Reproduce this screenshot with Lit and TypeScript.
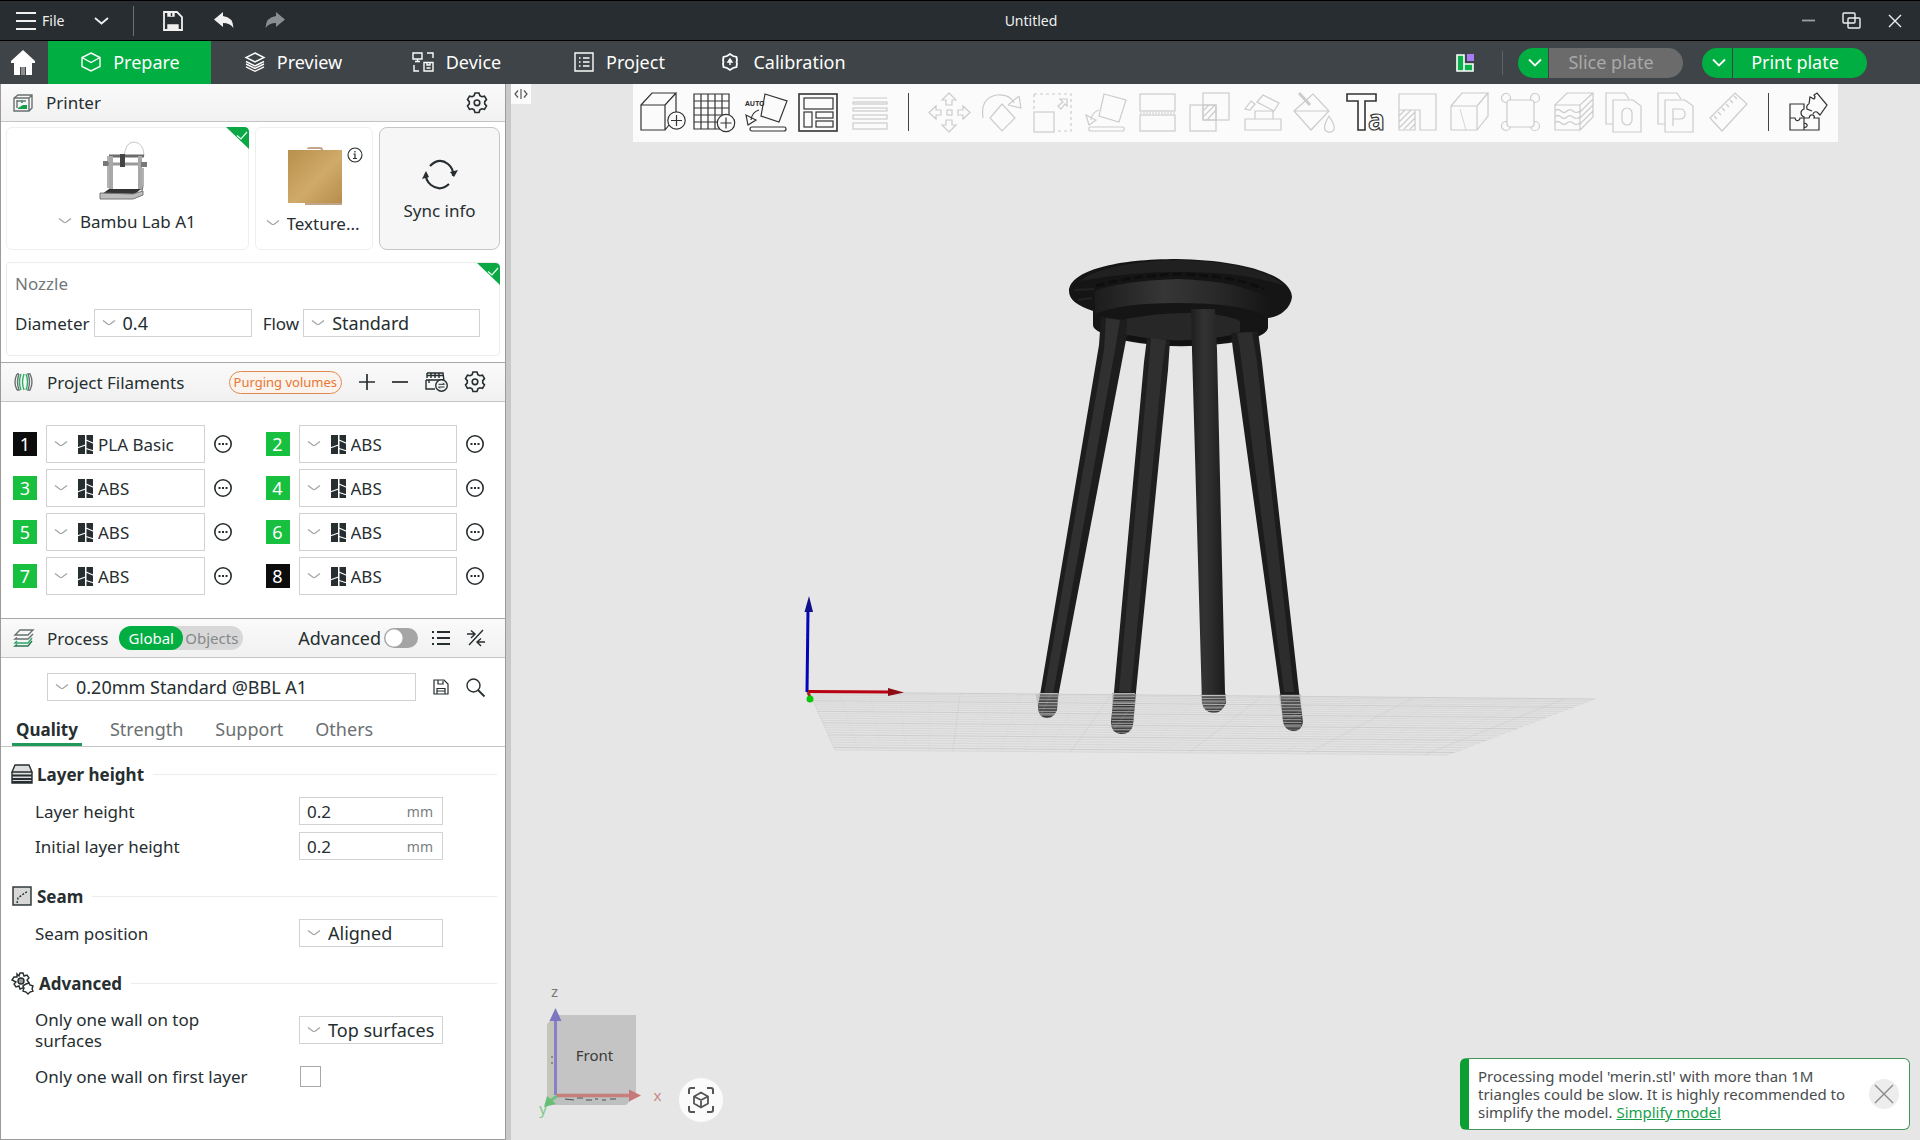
import { LitElement, html, svg, css, nothing } from "lit";
import type { TemplateResult } from "lit";
import { customElement, state } from "lit/decorators.js";
import { classMap } from "lit/directives/class-map.js";

type Shape = ReturnType<typeof svg>;

const icon = (w: number, h: number, body: Shape, cls = "") =>
  html`<svg class="ic ${cls}" width=${w} height=${h} viewBox="0 0 ${w} ${h}" aria-hidden="true">${body}</svg>`;

const chevron = () => icon(14, 8, svg`<path d="M1 1.500 6 5.300Q7 6 8 5.300L13 1.500"/>`, "chev");

const gearPath =
  "M8 1h4l.9 2.6 1.9 1.1 2.7-.6 2 3.5-1.8 2v2.3l1.8 2-2 3.5-2.7-.6-1.900 1.100L12 20.500H8l-.9-2.600-1.900-1.100-2.700.6-2-3.500 1.800-2V9.600l-1.800-2 2-3.500 2.700.6 1.900-1.100z";
const gear = () => icon(20, 22, svg`<path d=${gearPath}/><circle cx="10" cy="10.800" r="2.800"/>`, "gear");

const corner = () =>
  html`<span class="corner">${icon(23, 22, svg`<path d="M0 0H18Q23 0 23 5V22Z" fill="#0aa845" stroke="none"/><path d="M11 8.500 15 12 21 5" stroke="#eafff0" stroke-width="1.200"/>`)}</span>`;

const brand = () =>
  icon(15, 19, svg`<path d="M0 0H7V19H0ZM8.500 0H15V19H8.500Z" fill="#262e30" stroke="none"/><path d="M-1 13 7.500 10M8 5 16 8.500M8 13.500 16 16" stroke="#fff" stroke-width="1.200"/>`);

const navIcons: Record<string, TemplateResult> = {
  Prepare: icon(20, 20, svg`<path d="M10 1 19 5.500V14.500L10 19 1 14.500V5.500ZM1 5.500 10 10.500 19 5.500"/>`),
  Preview: icon(20, 20, svg`<path d="M10 1 19 5.500 10 10 1 5.500ZM1 9.500 10 14 19 9.500M1 12 10 16.500 19 12M1 14.800 10 19.300 19 14.800"/>`),
  Device: icon(22, 20, svg`<path d="M1 1H10V7H1ZM5.500 7V9.500M3 9.500H8M15 1H21V6M2 13V19H7M12 10.500H21V19H12ZM15 10.500V13H18V10.500M14.500 16H18.500"/>`),
  Project: icon(20, 20, svg`<path d="M1 1H19V19H1ZM5 6H6.500M9 6H15.500M5 10H6.500M9 10H15.500M5 14H6.500M9 14H15.500"/>`),
  Calibration: icon(22, 18, svg`<path d="M8 3 11 1 14 3 17.500 4 18 7.500 17.500 9 18 10.500 17.500 14 14 15 11 17 8 15 4.500 14 4 10.500 4.500 9 4 7.500 4.500 4Z" stroke-width="1.800"/><path d="M11 12V8M9 9 11 6 13 9Z" fill="#fff"/>`),
};

interface Tool { name: string; on?: boolean; art: Shape }
const tools: (Tool | null)[] = [
  { name: "Add", on: true, art: svg`<path d="M0 13H24V38H0ZM0 13 11 1H35L24 13M35 1V21M24 38 28 33"/><circle cx="35.500" cy="28.500" r="8.700" fill="#fbfbfb"/><path d="M30 28.500H41M35.500 23V34"/>` },
  { name: "Add plate", on: true, art: svg`<path d="M1 2H36V37H1ZM8 2V37M15 2V37M22 2V37M29 2V37M1 9H36M1 16H36M1 23H36M1 30H36"/><circle cx="33" cy="31" r="8.700" fill="#fbfbfb"/><path d="M27.500 31H38.500M33 25.500V36.500"/>` },
  { name: "Auto orient", on: true, art: svg`<text x="0" y="14" font-size="7" font-weight="700" stroke="none" fill="#333">AUTO</text><path d="M20 2 42 9 34 30 16 24Z"/><path d="M14 18Q7 20 6 28M1 23 3 33 11 28Z"/><rect x="5" y="35" width="36" height="4" rx="2"/>` },
  { name: "Arrange", on: true, art: svg`<rect x="2" y="2" width="38" height="37" stroke-width="1.600"/><rect x="7" y="6" width="29" height="11"/><rect x="7" y="20" width="8" height="15"/><rect x="19" y="20" width="17" height="6"/><rect x="19" y="29" width="17" height="6"/>` },
  { name: "Variable layer height", art: svg`<path d="M4 6H38"/><rect x="4" y="10" width="34" height="2"/><rect x="4" y="16" width="34" height="3"/><rect x="4" y="23" width="34" height="4"/><rect x="4" y="31" width="34" height="6"/>` },
  null,
  { name: "Move", art: svg`<path d="M20 1 27 8H23V13H17V8H13ZM20 40 27 33H23V28H17V33H13ZM0 20.500 7 14V18H12V23H7V27ZM41 20.500 34 14V18H29V23H34V27Z"/><rect x="18" y="18" width="5" height="5"/>` },
  { name: "Rotate", art: svg`<path d="M2 26Q-1 6 16 3 29 2 33 11M27 13 40 16 38 4M27 13 38 4M21 12 34 26 21 39 9 26Z"/>` },
  { name: "Scale", art: svg`<rect x="1" y="20" width="20" height="20"/><path d="M1 2H38V39H21M1 2V20" stroke-dasharray="3 3"/><path d="M25 14 30 10 27 7H34V14L32 12 28 17Z"/>` },
  { name: "Lay on face", art: svg`<path d="M19 2 41 8 34 30 14 24ZM14 18Q7 20 6 28M1 23 4 33 11 28Z"/><rect x="4" y="35" width="35" height="4" rx="1"/>` },
  { name: "Cut", art: svg`<rect x="3" y="2" width="35" height="17"/><rect x="3" y="23" width="35" height="16"/><path d="M3 21H38" stroke-dasharray="2 1"/>` },
  { name: "Mesh boolean", art: svg`<rect x="1" y="13" width="26" height="26"/><rect x="14" y="1" width="26" height="27"/><path d="M14 13H27V28H14ZM15 18 20 13M15 24 26 13M18 28 27 18"/>` },
  { name: "Support painting", art: svg`<path d="M4 27H40V38H4ZM14 27V19H32V27M16 10 22 3 38 11 33 19ZM4 17 10 9 14 12 9 18Z"/>` },
  { name: "Color painting", art: svg`<path d="M1 19 20 2 36 19 18 38ZM1 19H36"/><path d="M6 1 17 13" stroke-width="3"/><path d="M36 24Q44 36 40 39 36 42 32 38 30 34 36 24Z" fill="#fbfbfb"/>` },
  { name: "Text shape", on: true, art: svg`<path d="M2 2H31V9H20V38H13V9H2Z" stroke-width="1.600"/><text x="23" y="38" font-size="28" fill="#fbfbfb" stroke="#333" stroke-width="1.200" font-weight="700">a</text>` },
  { name: "Part painting", art: svg`<path d="M2 2H39V38H23V18H2ZM2 18V38H18V18M2 24 8 18M2 30 14 18M2 36 18 20M7 37 18 26M13 37 18 32"/>` },
  { name: "Seam painting", art: svg`<path d="M2 14H28V38H2ZM2 14 13 1H39L28 14M39 1V24L28 38"/><path d="M11 17 17 38" stroke-width=".8"/>` },
  { name: "Assembly frame", art: svg`<circle cx="5" cy="6" r="4.500"/><circle cx="34" cy="6" r="4.500"/><circle cx="5" cy="34" r="4.500"/><circle cx="34" cy="34" r="4.500"/><rect x="6" y="8" width="27" height="27" rx="3" fill="#fbfbfb"/>` },
  { name: "Fuzzy skin", art: svg`<path d="M2 13 14 1H40L27 13ZM40 1V25L27 38V13M27 20 40 7M27 26 40 13M27 32 40 19M2 13V38H27M2 19Q5 16 8 19T14 19 20 19 27 19M2 25Q5 22 8 25T14 25 20 25 27 25M2 31Q5 28 8 31T14 31 20 31 27 31"/>` },
  { name: "Outline view", art: svg`<path d="M8 32H1V1H20L24 7"/><path d="M8 8H28L36 14V40H8Z"/><rect x="17" y="16" width="10" height="17" rx="5"/>` },
  { name: "Part view", art: svg`<path d="M8 32H1V1H20L24 7"/><path d="M8 8H28L36 14V40H8Z"/><path d="M16 34V17H23Q28 17 28 22 28 27 23 27H16"/>` },
  { name: "Measure", art: svg`<path d="M1 26 26 1 38 12 13 39ZM5 24 8 27M9 20 12 23M13 16 16 19M17 12 20 15M21 8 24 11M25 4 28 7"/>` },
  null,
  { name: "Assembly view", on: true, art: svg`<path d="M1 12H15V17Q12 18 12 21T15 25V38H1ZM1 26H6Q7 30 10 28 11 27 11 26H15M15 26H20Q21 22 24 23 26 24 25 26H30V38H1M15 26V31Q19 32 18 34 17 36 15 35M20 12 21 5 25 7Q27 5 25 3L28 1 38 13 31 23 28 20Q25 19 24 22M20 12Q17 13 18 17L23 19"/>` },
];

const sectionIcons: Record<string, TemplateResult> = {
  "Layer height": icon(22, 20, svg`<path d="M4 1H18L21 8H1ZM1 8V19H21V8" fill="#ddd"/><path d="M1 11.500H21M1 15H21M1 18H21" stroke-width="2"/>`),
  Seam: icon(22, 20, svg`<rect x="2" y="1" width="18" height="18" fill="#d8d8d8"/><path d="M6 17 7 12 11 9 17 5" stroke-dasharray="2 1.500"/>`),
  Advanced: icon(24, 22, svg`<path d="M6 2 8 4 9 1H12L13 4 16 3 18 6 16 8 18 11 16 13 13 13 12 16 9 17 8 14 5 15 3 12 5 10 1 8 3 5 6 5Z"/><circle cx="10" cy="9" r="3" fill="#999"/><path d="M15 12 18 11 19 13 22 14 21 17 22 19 19 20 17 22 15 20 12 19 13 16 12 14Z" fill="#fff"/>`),
};

const shared = css`
  :host { --ink: #262e30; --line: #d2d2d2; --green: #00ae42; font-family: "Noto Sans", "Liberation Sans", sans-serif; color: var(--ink); box-sizing: border-box; }
  *, *::before, *::after { box-sizing: border-box; }
  button, input, select { font: inherit; color: inherit; margin: 0; }
  button { display: flex; align-items: center; justify-content: center; padding: 0; border: 0; background: none; }
  .ic { display: block; flex: none; overflow: visible; fill: none; stroke: currentColor; stroke-width: 1.4; }
  .chev { color: #a2a6a8; stroke-width: 1.3; }
`;

@customElement("title-bar")
export class TitleBar extends LitElement {
  static styles = [shared, css`
    :host { display: flex; align-items: center; height: 41px; padding: 0 18px 0 16px; border-top: 1px solid #000; border-bottom: 1px solid #000; background: #272d30; color: #f0f0f0; font-size: 14px; }
    .group { flex: 1 1 0; display: flex; align-items: center; }
    .file { gap: 6px; }
    .drop { margin-left: 30px; }
    .sep { width: 1px; height: 30px; margin: 0 29px 0 24px; background: #6b7073; }
    .tools { display: flex; gap: 31px; }
    .right { justify-content: flex-end; gap: 26px; }
    .title { margin: 0 0 0 144px; font-size: 14px; font-weight: 400; }
    .dim { color: #8a8e90; }
  `];
  render() {
    return html`
      <div class="group">
        <button class="file">${icon(20, 18, svg`<path d="M0 1H20M0 9H20M0 17H20" stroke-width="1.800"/>`)}File</button>
        <button class="drop" aria-label="File menu">${icon(15, 8, svg`<path d="M1 1 7.500 6.500 14 1" stroke-width="1.800"/>`)}</button>
        <span class="sep"></span>
        <span class="tools">
          <button aria-label="Save">${icon(20, 20, svg`<path d="M1 1H14L19 6V19H1Z" stroke-width="1.800"/><path d="M5 2H11V5H5ZM5 14H15V18H5Z" fill="#f0f0f0"/><path d="M8.500 2V5" stroke="#272d30"/>`)}</button>
          <button aria-label="Undo">${icon(20, 18, svg`<path d="M0 7.500 9 0V4Q19 5 19.500 16 16 11 9 11V15Z" fill="#f0f0f0" stroke="none"/>`)}</button>
          <button class="dim" aria-label="Redo">${icon(20, 18, svg`<path d="M20 7.500 11 0V4Q1 5 .5 16 4 11 11 11V15Z" fill="#8a8e90" stroke="none"/>`)}</button>
        </span>
      </div>
      <h1 class="title">Untitled</h1>
      <div class="group right">
        <button aria-label="Minimize">${icon(14, 18, svg`<path d="M0 8.500H13" stroke="#9da0a2" stroke-width="1.800"/>`)}</button>
        <button aria-label="Restore">${icon(20, 18, svg`<rect x="1" y="1" width="12" height="10" rx="1"/><rect x="6" y="6" width="12" height="10" rx="1"/>`)}</button>
        <button aria-label="Close">${icon(14, 14, svg`<path d="M1 1 13 13M13 1 1 13"/>`)}</button>
      </div>`;
  }
}

@customElement("nav-bar")
export class NavBar extends LitElement {
  static styles = [shared, css`
    :host { display: flex; align-items: center; height: 43px; padding-right: 53px; background: #3e4447; color: #fdfdfd; font-size: 18px; }
    .home { width: 48px; height: 43px; padding-right: 2px; }
    .tabs { display: flex; height: 43px; }
    .tab { width: 163px; gap: 12px; padding: 0 0 1px 2px; }
    .tab.active { background: var(--green); }
    .right { display: flex; align-items: center; margin-left: auto; }
    .sep { width: 1px; height: 24px; margin: 0 15px 0 28px; background: #5d6366; }
    .split { display: flex; gap: 1px; height: 30px; }
    .split + .split { margin-left: 19px; }
    .more { width: 30px; border-radius: 15px 0 0 15px; background: var(--green); padding-left: 4px; }
    .go { width: 134px; border-radius: 0 15px 15px 0; background: var(--green); padding: 0 10px 2px 0; }
    .go[disabled] { background: #6b6b6b; color: #a9a9a9; }
  `];
  render() {
    const action = (label: string, off = false) => html`
      <div class="split">
        <button class="more" aria-label="${label} options">${icon(14, 9, svg`<path d="M1 1.500 7 7.500 13 1.500" stroke-width="1.800"/>`)}</button>
        <button class="go" ?disabled=${off}>${label}</button>
      </div>`;
    return html`
      <button class="home" aria-label="Home">${icon(24, 26, svg`<path d="M12 0 24 11V13H21V25H15V17H9V25H3V13H0V11Z" fill="#fff" stroke="none"/><path d="M10 17H14V25H10Z" fill="#8a8e90" stroke="none"/>`)}</button>
      <nav class="tabs">
        ${Object.keys(navIcons).map((n) => html`<button class=${classMap({ tab: true, active: n === "Prepare" })}>${navIcons[n]}${n}</button>`)}
      </nav>
      <div class="right">
        <button aria-label="Layout">${icon(18, 18, svg`<rect x="11" y="0" width="7" height="7" fill="#a77cf5" stroke="none"/><path d="M1 1H8V17H1ZM8 10H17V17H8Z" fill="#0bb04b" stroke="#fff" stroke-width="1.600"/>`)}</button>
        <span class="sep"></span>
        ${action("Slice plate", true)}${action("Print plate")}
      </div>`;
  }
}

@customElement("combo-box")
export class ComboBox extends LitElement {
  static formAssociated = true;
  static shadowRootOptions: ShadowRootInit = { ...LitElement.shadowRootOptions, delegatesFocus: true };
  static properties = { value: {}, label: {}, brand: { type: Boolean } };
  declare value: string;
  declare label: string;
  declare brand: boolean;
  static styles = [shared, css`
    :host { display: grid; align-items: center; height: 28px; border: 1px solid var(--line); background: #fff; font-size: 18px; }
    .chev, .mark, select { grid-area: 1 / 1; }
    .chev { margin-left: 7px; pointer-events: none; z-index: 1; }
    .mark { margin-left: 31px; pointer-events: none; z-index: 1; }
    select { width: 100%; height: 100%; padding: 0 0 0 28px; border: 0; background: none; appearance: none; outline: none; }
    .branded { padding-left: 51px; font-size: 17px; }
  `];
  render() {
    return html`${chevron()}${this.brand ? html`<span class="mark">${brand()}</span>` : nothing}
      <select class=${this.brand ? "branded" : ""} aria-label=${this.label}><option>${this.value}</option></select>`;
  }
}

@customElement("side-panel")
export class SidePanel extends LitElement {
  @state() private advanced = false;
  static styles = [shared, css`
    :host { display: flex; flex-direction: column; border: 1px solid #9b9b9b; border-top: 0; background: #fff; font-size: 17px; line-height: 21px; }
    .head { display: flex; align-items: center; height: 40px; padding: 0 20px 0 13px; border-top: 1px solid #a8a8a8; border-bottom: 1px solid #c4c4c4; background: linear-gradient(#fafafa, #f1f1f1); }
    .head.first { height: 38px; border-top: 0; padding-right: 18px; padding-left: 12px; }
    h2 { margin: 0; font-size: 17px; font-weight: 400; white-space: nowrap; }
    .lead { width: 33px; }
    .push { margin-left: auto; }
    .gear { color: #262e30; stroke-width: 1.6; }
    .cards { display: grid; grid-template-columns: 243fr 118fr 121fr; gap: 6px; padding: 5px 5px 0 5px; }
    .card { position: relative; display: flex; flex-direction: column; align-items: center; height: 123px; border: 1px solid #efefef; border-radius: 6px; }
    .corner { position: absolute; top: -1px; right: -1px; }
    .pick { display: flex; align-items: center; gap: 8px; padding-left: 5px; }
    .pick select { width: 122px; height: 26px; padding: 0; border: 0; background: none; appearance: none; font-size: 17px; }
    .pick.narrow { gap: 7px; padding: 0; }
    .pick.narrow select { width: 76px; }
    .a1 { margin: 12px 8px 8px 0; }
    .plate { display: flex; gap: 5px; margin: 19px 0 3px 22px; }
    .info { height: 16px; }
    .sync { justify-content: center; gap: 9px; padding-top: 3px; border-color: #c6c6c6; border-radius: 8px; background: #f6f6f6; }
    .nozzle { position: relative; margin: 12px 5px 6px 5px; height: 94px; padding: 10px 19px 0 8px; border: 1px solid #ececec; border-radius: 4px; }
    .nozzle .corner { top: 0; }
    .muted { color: #73787a; }
    .fields { display: flex; align-items: center; gap: 4px; margin-top: 15px; }
    .fields .gap { margin-left: 7px; }
    .dia { flex: 158; }
    .flow { flex: 177; }
    .purge { height: 23px; padding: 0 4px; border: 1px solid #e08a50; border-radius: 12px; background: #fbf3ee; color: #e77733; font-size: 13px; }
    .acts { display: flex; align-items: center; gap: 17px; margin-left: auto; }
    .filaments { display: grid; grid-template-columns: 1fr 1fr; row-gap: 6px; column-gap: 34px; padding: 23px 21px 23px 12px; margin: 0; list-style: none; }
    .fil { display: flex; align-items: center; gap: 9px; }
    .fil combo-box { flex: 1; height: 38px; }
    .chip { width: 24px; height: 24px; background: #18c040; color: #fff; font-size: 18px; }
    .chip.black { background: #0c0c0c; }
    .switch { display: flex; margin-left: 11px; border-radius: 12px; background: #d8d8d8; font-size: 15px; }
    .switch button { height: 24px; padding: 0 5px 0 2px; border-radius: 12px; color: #84888a; }
    .switch .on { width: 64px; padding: 0; background: var(--green); color: #fff; }
    .adv { display: flex; align-items: center; gap: 3px; margin-left: auto; font-size: 18px; }
    .toggle { width: 34px; height: 20px; appearance: none; border-radius: 10px; background: radial-gradient(circle at 10px 10px, #fff 8px, #a5a5a5 9px); }
    .toggle:checked { background: radial-gradient(circle at 24px 10px, #fff 8px, #00ae42 9px); }
    .icons { display: flex; gap: 17px; margin-left: 14px; align-items: center; }
    .preset { display: flex; align-items: center; padding: 15px 20px 0 46px; }
    .preset combo-box { flex: 1; }
    .preset button { margin-left: 17px; }
    .tabs { display: flex; gap: 20px; padding: 12px 0 0 11px; margin-top: 3px; border-bottom: 1px solid #c4c4c4; }
    .tab { height: 30px; padding: 0 6px; border-bottom: 3px solid transparent; color: #6b7072; font-size: 18px; }
    .tab.on { margin-right: 2px; padding: 0 4px; border-color: #1f9a5b; color: var(--ink); font-size: 17px; font-weight: 700; }
    .group { display: flex; align-items: center; gap: 4px; margin: 16px 8px 0 10px; height: 22px; font-weight: 700; }
    .group h3 { margin: 0; font-size: 17px; }
    .group::after { content: ""; flex: 1; height: 1px; margin-left: 5px; background: #ececec; }
    .rows { display: grid; grid-template-columns: 264px 144px; align-items: center; padding: 12px 0 0 34px; row-gap: 7px; }
    .rows + .group { margin-top: 25px; }
    .rows.tall { padding-top: 15px; row-gap: 15px; }
    .rows label { max-width: 220px; }
    .num { display: flex; align-items: center; height: 28px; padding: 0 9px 0 7px; border: 1px solid var(--line); color: #7a7e80; font-size: 14px; }
    .num input { flex: 1; min-width: 0; padding: 0; border: 0; outline: 0; background: none; color: var(--ink); font-size: 17px; }
    .check { width: 21px; height: 21px; appearance: none; border: 1px solid #a8a8a8; background: #fff; margin: 0 1px; }
  `];

  private fil(n: number) {
    const name = n === 1 ? "PLA Basic" : "ABS";
    return html`<li class="fil">
      <button class=${classMap({ chip: true, black: n === 1 || n === 8 })}>${n}</button>
      <combo-box brand .value=${name} .label=${`Filament ${n}`}></combo-box>
      <button aria-label="Edit filament ${n}">${icon(18, 18, svg`<circle cx="9" cy="9" r="8.200" stroke-width="1.600"/><path d="M4.500 9H6.500M8 9H10M11.500 9H13.500" stroke-width="2"/>`)}</button>
    </li>`;
  }
  private group(name: string, rows: TemplateResult, tall = false) {
    return html`<div class="group">${sectionIcons[name]}<h3>${name}</h3></div><div class=${classMap({ rows: true, tall })}>${rows}</div>`;
  }
  render() {
    return html`
      <header class="head first">
        <span class="lead">${icon(20, 18, svg`<path d="M1 4 5 1H19V14L16 17H1ZM1 4H16V17M16 4 19 1M4 6V14M4 7H13" stroke="#6a7072"/><path d="M5 14 10 11 14 11V15H5Z" fill="#12a04b" stroke="none"/><path d="M8 6H10V9H8Z" fill="#4d9a74" stroke="none"/>`)}</span>
        <h2>Printer</h2>
        <button class="push" aria-label="Printer settings">${gear()}</button>
      </header>
      <div class="cards">
        <div class="card">
          ${corner()}
          <span class="a1">${icon(50, 60, svg`
            <path d="M25 18Q26 2 35 2 45 3 45 16" stroke="#c8c8c8" stroke-width="1"/>
            <path d="M10 16H45" stroke="#6b6b6b" stroke-width="3"/>
            <path d="M6 24H48" stroke="#9a9a9a" stroke-width="3"/>
            <path d="M12 16V50M41 16V50" stroke="#a8a8a8" stroke-width="4"/>
            <path d="M9 16V48M44 28V46L42 56" stroke="#666" stroke-width="1"/>
            <rect x="21" y="14" width="5" height="13" fill="#444" stroke="none"/>
            <path d="M4 26H9V21H4ZM42 22H48V27H42Z" fill="#777" stroke="none"/>
            <path d="M10 49H42L36 54H3Z" fill="#333" stroke="none"/>
            <path d="M1 53 34 54 44 51V55L34 59H1Z" fill="#bdbdbd" stroke="#777" stroke-width="1"/>`)}</span>
          <span class="pick">${chevron()}<select aria-label="Printer"><option>Bambu Lab A1</option></select></span>
        </div>
        <div class="card">
          <span class="plate">
            <svg class="ic" width="54" height="60" viewBox="0 0 54 60" aria-hidden="true">
              <defs><linearGradient id="gold" x1="0" y1="0" x2="1" y2="1"><stop offset="0" stop-color="#b9904e"/><stop offset=".55" stop-color="#cfaa68"/><stop offset="1" stop-color="#b68d4c"/></linearGradient></defs>
              <path d="M20 2Q20 1 22 1H32Q34 1 34 3M17 57H54" stroke="#c0a58a" stroke-width="2"/>
              <rect x="0" y="3" width="54" height="53" fill="url(#gold)" stroke="none"/>
            </svg>
            <button class="info" aria-label="Plate information">${icon(16, 16, svg`<circle cx="8" cy="8" r="7" stroke-width="1.100"/><path d="M8 4V5.500M6.500 7H8V11.500M6 11.500H10" stroke-width="1.200"/>`)}</button>
          </span>
          <span class="pick narrow">${chevron()}<select aria-label="Plate type"><option>Texture...</option></select></span>
        </div>
        <button class="card sync">
          ${icon(36, 32, svg`<path d="M8 7Q17-2 26 5 32 10 31 17M27 25Q18 33 9 26 3 21 4 14" stroke-width="2.200"/><path d="M28 13 36 11 32 18ZM7 18 0 20 4 12Z" fill="#262e30" stroke="none"/>`)}
          Sync info
        </button>
      </div>
      <div class="nozzle">
        ${corner()}
        <div class="muted">Nozzle</div>
        <div class="fields">
          <label for="dia">Diameter</label><combo-box id="dia" class="dia" .value=${"0.4"} .label=${"Diameter"}></combo-box>
          <label for="flow" class="gap">Flow</label><combo-box id="flow" class="flow" .value=${"Standard"} .label=${"Flow"}></combo-box>
        </div>
      </div>

      <header class="head">
        <span class="lead">${icon(19, 18, svg`<path d="M3 1Q-1 9 3 17M5 1Q2 9 5 17H3M3 1H5M14 1Q17 9 14 17H16Q20 9 16 1Z" stroke="#6a7072"/><path d="M7 1Q4 9 7 17M10 1Q7 9 10 17M12 1Q15 9 12 17" stroke="#2fb066"/>`)}</span>
        <h2>Project Filaments</h2>
        <div class="acts">
          <button class="purge">Purging volumes</button>
          <button aria-label="Add filament">${icon(16, 16, svg`<path d="M8 0V16M0 8H16" stroke-width="1.700"/>`)}</button>
          <button aria-label="Remove filament">${icon(16, 16, svg`<path d="M0 8H16" stroke-width="1.700"/>`)}</button>
          <button aria-label="Sync AMS">${icon(23, 20, svg`<path d="M2 1H18L19 9M2 1V6M6 1V6M10 1V6M14 1V6M2 3.500H18M1 8H19M1 8V17H10M4 8V11"/><circle cx="16.500" cy="13.500" r="5.800" fill="#f5f5f5"/><path d="M13.500 12.300H19.500L18 10.800M19.500 15H13.500L15 16.500" stroke-width="1"/>`)}</button>
          <button aria-label="Filament settings">${gear()}</button>
        </div>
      </header>
      <ul class="filaments">${[1, 2, 3, 4, 5, 6, 7, 8].map((n) => this.fil(n))}</ul>

      <header class="head">
        <span class="lead">${icon(20, 18, svg`<path d="M6 1H19L14 6H1ZM18 6 19 5 14 10H1L3 8.500" stroke="#6a7072"/><path d="M18 9 14 14H1L3 12" stroke="#2fa566"/><path d="M18 12 14 17H1L3 15.500" stroke="#2a7a52"/>`)}</span>
        <h2>Process</h2>
        <div class="switch"><button class="on">Global</button><button>Objects</button></div>
        <label class="adv">Advanced
          <input class="toggle" type="checkbox" role="switch" .checked=${this.advanced} @change=${(e: Event) => (this.advanced = (e.target as HTMLInputElement).checked)} /></label>
        <span class="icons">
          <button aria-label="Parameter list">${icon(18, 16, svg`<path d="M0 2H2M5 2H18M0 8H2M5 8H18M0 14H2M5 14H18" stroke-width="1.800"/>`)}</button>
          <button aria-label="Compare presets">${icon(18, 18, svg`<path d="M16 1 2 16M0 5H7M4 1.500 8 5 4 9M18 13H11M14 9.500 10 13 14 17"/>`)}</button>
        </span>
      </header>
      <div class="preset">
        <combo-box .value=${"0.20mm Standard @BBL A1"} .label=${"Process preset"}></combo-box>
        <button aria-label="Save preset">${icon(16, 16, svg`<path d="M1 1H11L15 5V15H1ZM5 1V5H10V2M4 15V9.500H12V15M4 12H12" stroke-width="1.200"/>`)}</button>
        <button aria-label="Search">${icon(19, 19, svg`<circle cx="7.500" cy="7.500" r="6.500"/><path d="M12 12 18.500 18.500" stroke-width="1.800"/>`)}</button>
      </div>
      <nav class="tabs" role="tablist">
        ${["Quality", "Strength", "Support", "Others"].map((t, i) => html`<button role="tab" aria-selected=${i === 0} class=${classMap({ tab: true, on: i === 0 })}>${t}</button>`)}
      </nav>
      ${this.group("Layer height", html`
        <label for="lh">Layer height</label><span class="num"><input id="lh" value="0.2" />mm</span>
        <label for="ilh">Initial layer height</label><span class="num"><input id="ilh" value="0.2" />mm</span>`)}
      ${this.group("Seam", html`
        <label for="seam">Seam position</label><combo-box id="seam" .value=${"Aligned"} .label=${"Seam position"}></combo-box>`)}
      ${this.group("Advanced", html`
        <label for="top">Only one wall on top surfaces</label><combo-box id="top" .value=${"Top surfaces"} .label=${"Only one wall on top surfaces"}></combo-box>
        <label for="fl">Only one wall on first layer</label><input id="fl" class="check" type="checkbox" />`, true)}`;
  }
}

type Pt = [number, number];
const lerp = (a: Pt, b: Pt, t: number): Pt => [a[0] + (b[0] - a[0]) * t, a[1] + (b[1] - a[1]) * t];
const bed: Pt[] = [[809, 692], [1595, 699], [1448, 755], [835, 750]];

@customElement("scene-view")
export class SceneView extends LitElement {
  static styles = [shared, css`
    :host { position: relative; display: flex; flex-direction: column; background: #e6e6e6; overflow: hidden; }
    .world { position: absolute; inset: 0; width: 100%; height: 100%; }
    .top { position: relative; display: flex; align-items: flex-start; }
    .fold { width: 20px; height: 20px; background: #fbfbfb; color: #555; }
    .bar { display: flex; align-items: center; height: 58px; padding: 0 9px 2px 8px; gap: 12px; margin: 0 auto; background: #fbfbfb; }
    .pad { width: 20px; }
    .tool { width: 40px; height: 40px; color: #cccccc; }
    .tool.on { color: #333; }
    .tool .ic { stroke-width: 1.2; }
    .sep { width: 1px; height: 38px; margin: 0 8px 0 7px; background: #444; }
    .fit { position: absolute; left: 168px; bottom: 18px; width: 44px; height: 44px; border-radius: 50%; background: #fbfbfb; color: #555; }
    .toast { position: absolute; right: 10px; bottom: 10px; display: flex; align-items: center; width: 450px; height: 72px; padding: 0 10px 0 9px; border: 1px solid #45955a; border-left: 9px solid #0b9e30; border-radius: 6px; background: #fff; font-size: 15px; line-height: 18px; color: #484c4e; }
    .toast p { flex: 1; margin: 0; }
    .toast a { color: #16a04a; }
    .x { width: 30px; height: 30px; border-radius: 50%; background: #ededed; color: #8a8a8a; }
  `];

  private grid() {
    const out: Shape[] = [];
    for (let i = 0; i <= 26; i++) {
      const t = Math.pow(i / 26, 1.15);
      const a = lerp(bed[0], bed[3], t), b = lerp(bed[1], bed[2], t);
      out.push(svg`<path d="M${a[0]} ${a[1]}L${b[0]} ${b[1]}" opacity=${i % 5 ? 0.4 : 0.75}/>`);
    }
    for (let i = 0; i <= 26; i++) {
      const a = lerp(bed[0], bed[1], i / 26), b = lerp(bed[3], bed[2], i / 26);
      out.push(svg`<path d="M${a[0]} ${a[1]}L${b[0]} ${b[1]}" opacity=${i % 5 ? 0.15 : 0.4}/>`);
    }
    return out;
  }
  private feet() {
    const out: Shape[] = [];
    const spans: [number, number, number, number][] = [[1039, 1058, 693, 716], [1112, 1135, 693, 731], [1202, 1225, 695, 711], [1281, 1301, 695, 728]];
    for (const [l, r, t, b] of spans)
      for (let y = t, k = 0; y < b; y += 3, k++) out.push(svg`<path d="M${l} ${y + 0.5}H${r}" opacity=${k ? 0.6 : 1}/>`);
    return out;
  }
  render() {
    return html`
      <svg class="world" viewBox="511 84 1409 1056" preserveAspectRatio="xMidYMid meet" aria-hidden="true">
        <defs>
          <linearGradient id="leg" x1="0" x2="1" y1="0" y2="0"><stop offset="0" stop-color="#1e1e1e"/><stop offset=".35" stop-color="#323232"/><stop offset=".6" stop-color="#2c2c2c"/><stop offset="1" stop-color="#191919"/></linearGradient>
          <linearGradient id="ring" x1="0" x2="1" y1="0" y2="0"><stop offset="0" stop-color="#1c1c1c"/><stop offset=".4" stop-color="#363636"/><stop offset=".7" stop-color="#292929"/><stop offset="1" stop-color="#161616"/></linearGradient>
          <clipPath id="feet"><path d="M1035 690H1060L1056 712Q1052 719 1046 718 1038 717 1038 708ZM1112 690H1137L1133 725Q1131 734 1121 734 1111 733 1112 722ZM1200 690H1227L1225 704Q1221 713 1213 713 1204 712 1202 704ZM1278 690H1300L1303 722Q1302 731 1293 731 1285 730 1283 722Z"/></clipPath>
        </defs>
        <path d="M${bed.map((p) => p.join(" ")).join("L")}Z" fill="#dedede" opacity=".4"/>
        <path d="M1069 291C1070 270 1118 259 1177 259 1240 260 1291 274 1292 297 1291 308 1280 317 1268 318L1268 328Q1266 336 1245 340 1215 347 1170 346 1125 343 1110 336 1093 331 1093 325L1093 311C1078 306 1069 300 1069 291Z" fill="#151515"/>
        <path d="M1080 281C1095 268 1135 261 1177 260 1230 261 1272 271 1284 286 1250 274 1215 272 1177 272 1130 272 1100 278 1080 281Z" fill="#202020"/>
        <path d="M1096 286Q1130 276 1180 274 1235 276 1264 289" stroke="#0e0e0e" stroke-width="3" stroke-dasharray="9 4" fill="none"/>
        <path d="M1095 291Q1120 281 1177 279 1240 281 1268 298V316Q1240 303 1177 303 1120 303 1095 314Z" fill="url(#ring)"/>
        <path d="M1074 290 1094 289M1078 300 1092 298" stroke="#222" stroke-width="2"/>
        <path d="M1126 319Q1160 312 1195 313 1225 314 1240 321V334Q1210 341 1175 341 1140 340 1126 335Z" fill="#272727"/>
        <path d="M1128 337Q1180 348 1232 337" stroke="#111" stroke-width="4" fill="none"/>
        <path d="M1101 317 1127 320 1126 340 1058 697 1057 710Q1053 719 1046 718 1038 717 1038 706L1040 695 1099 345Z" fill="#1d1d1d"/>
        <path d="M1106 318 1120 320 1115 350 1053 695 1044 695 1104 350Z" fill="#303030"/>
        <path d="M1147 338 1170 341 1168 370 1136 692 1133 725Q1131 734 1121 734 1111 733 1111 722L1114 692 1144 362Z" fill="#1f1f1f"/>
        <path d="M1151 338 1166 340 1162 370 1131 692 1119 692 1149 362Z" fill="#2f2f2f"/>
        <path d="M1191 309 1215 309 1217 350 1225 692 1226 703Q1222 713 1213 713 1204 712 1202 703L1192 350Z" fill="url(#leg)"/>
        <path d="M1231 333 1258 331 1262 362 1299 692 1303 722Q1302 731 1293 731 1284 730 1283 721L1280 692 1233 350Z" fill="#1c1c1c"/>
        <path d="M1237 333 1252 332 1257 362 1294 692 1284 692 1240 350Z" fill="#2d2d2d"/>
        <g clip-path="url(#feet)"><path d="M1030 694H1310V740H1030Z" fill="#777" opacity=".3"/><g stroke="#b0b0b0" stroke-width="1">${this.feet()}</g></g>
        <g stroke="#c6c6c6" stroke-width="1" fill="none">${this.grid()}</g>
        <path d="M807 692 808 610" stroke="#0404b8" stroke-width="3"/><path d="M804.500 612 809 596 813 612Z" fill="#10108c"/>
        <path d="M808 691.500 890 692" stroke="#b80012" stroke-width="3"/><path d="M888 688 904 692.500 888 696Z" fill="#8e0a14"/>
        <path d="M808 692 811 700" stroke="#a02818" stroke-width="3"/><circle cx="810" cy="699" r="3.500" fill="#08c808"/>

        <path d="M547 1024 556 1015V1096L547 1104Z" fill="#c3c4ba"/>
        <path d="M556 1095H636L626 1105H547Z" fill="#bcc0bf"/>
        <path d="M555 1015H636V1096H555Z" fill="#c4c4c4"/>
        <path d="M565 1099 574 1100M577 1098H583M586 1100H592M595 1099H598M602 1100H606M610 1099H616" stroke="#4c4c4c" stroke-width="1"/>
        <path d="M552 1056V1058M552 1062V1064" stroke="#555"/>
        <path d="M555.500 1095V1018" stroke="#8a80c8" stroke-width="3"/><path d="M549.500 1021 555.500 1008 561.500 1021Z" fill="#7d76c0"/>
        <path d="M556 1095.500H631" stroke="#c77f7d" stroke-width="3.500"/><path d="M629 1089.500 641 1095.500 629 1101.500Z" fill="#c77878"/>
        <path d="M557 1096 550 1101" stroke="#6cc47c" stroke-width="3"/><path d="M544 1107 547 1096 556 1104Z" fill="#66bf74"/>
        <text x="594.500" y="1061" text-anchor="middle" font-size="15" fill="#3a3a3a">Front</text>
        <text x="554.500" y="997" text-anchor="middle" font-size="15" fill="#777">z</text>
        <text x="657.500" y="1101" text-anchor="middle" font-size="15" fill="#c98888">x</text>
        <text x="543" y="1114" text-anchor="middle" font-size="15" fill="#80c888">y</text>
      </svg>
      <div class="top">
        <button class="fold" aria-label="Collapse sidebar">${icon(14, 10, svg`<path d="M7 0V10M4 1.500 1 5 4 8.500M10 1.500 13 5 10 8.500" stroke-width="1.200"/>`)}</button>
        <span class="pad"></span>
        <div class="bar" role="toolbar">
          ${tools.map((t) => t
            ? html`<button class=${classMap({ tool: true, on: !!t.on })} aria-label=${t.name}>${icon(40, 40, t.art)}</button>`
            : html`<span class="sep"></span>`)}
        </div>
      </div>
      <button class="fit" aria-label="Fit view">${icon(26, 26, svg`<path d="M1 7V3Q1 1 3 1H7M19 1H23Q25 1 25 3V7M25 19V23Q25 25 23 25H19M7 25H3Q1 25 1 23V19" stroke-width="2"/><path d="M13 5.500 20 9.500V16.500L13 20.500 6 16.500V9.500ZM6 9.500 13 13 20 9.500M13 13V20.500" stroke-width="1.800"/>`)}</button>
      <div class="toast" role="status">
        <p>Processing model 'merin.stl' with more than 1M<br />triangles could be slow. It is highly recommended to<br />simplify the model. <a href="#simplify">Simplify model</a></p>
        <button class="x" aria-label="Dismiss">${icon(20, 20, svg`<path d="M1 1 19 19M19 1 1 19"/>`)}</button>
      </div>`;
  }
}

@customElement("app-root")
export class AppRoot extends LitElement {
  static styles = [shared, css`
    :host { display: flex; flex-direction: column; min-height: 100vh; }
    .body { flex: 1; display: grid; grid-template-columns: 506px 5px 1fr; }
    .split { background: #c9c9c9; }
  `];
  render() {
    return html`
      <title-bar></title-bar>
      <nav-bar></nav-bar>
      <div class="body">
        <side-panel></side-panel>
        <span class="split"></span>
        <scene-view></scene-view>
      </div>`;
  }
}
